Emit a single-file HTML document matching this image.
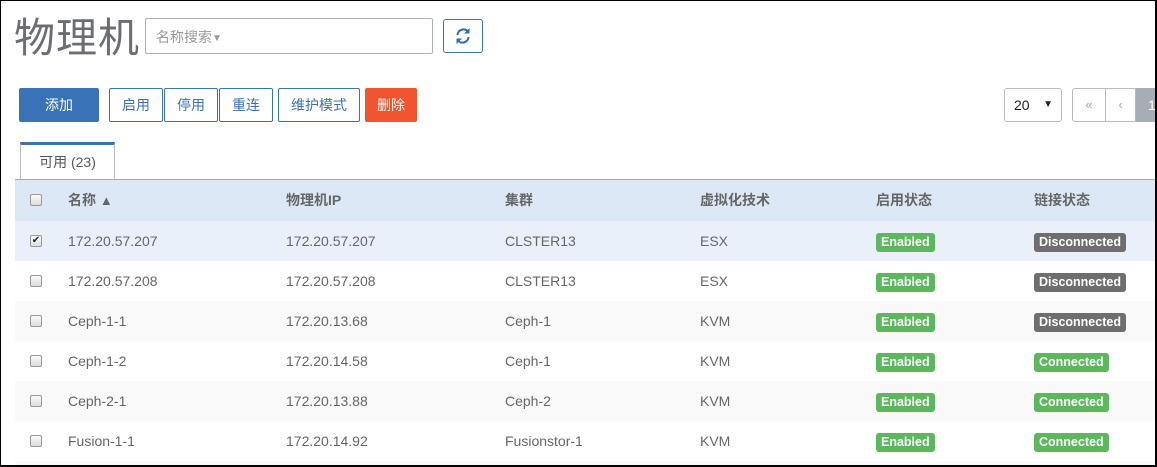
<!DOCTYPE html>
<html><head><meta charset="utf-8"><style>
*{box-sizing:border-box;margin:0;padding:0}
html,body{width:1157px;height:467px;overflow:hidden}
body{background:#fff;font-family:"Liberation Sans","Noto Sans CJK SC",sans-serif;position:relative}
.frame{position:absolute;left:0;top:0;width:1157px;height:467px;border:1px solid #000;border-right-width:2px;border-bottom-width:2px;z-index:10;pointer-events:none}
.clip{position:absolute;left:0;top:0;width:1155px;height:465px;overflow:hidden}
.a{position:absolute}
h1{position:absolute;left:14px;top:14px;font-size:41px;font-weight:normal;color:#6b6f75;line-height:48px;letter-spacing:1px}
.search{left:145px;top:18px;width:288px;height:36px;border:1px solid #a9b1ba;border-radius:2px;font-size:14px;color:#999;padding:10px 10px;line-height:16px}
.ref{left:443px;top:19px;width:40px;height:34px;border:1px solid #3a72b8;border-radius:3px}
.btn{position:absolute;top:88px;height:34px;border:1px solid #3a72b8;border-radius:2px;color:#3a72b8;font-size:14px;text-align:center;line-height:32px;background:#fff}
.tab{left:20px;top:142px;width:95px;height:38px;border:1px solid #bbb;border-top:3px solid #3a72b8;border-bottom:none;background:#fff;font-size:14px;color:#555;text-align:center;line-height:34px}
.line{left:15px;top:179px;width:1142px;height:1px;background:#aaa}
.row{position:absolute;left:15px;width:1142px;height:40px;font-size:14px;color:#666}
.row span{position:absolute;top:12px;line-height:16px}
.hd{background:#dce8f6;font-weight:bold;color:#666}
.cb{position:absolute;left:15px;top:14px;width:12px;height:12px;border:1px solid #999;border-radius:2px;background:linear-gradient(#fafafa,#ddd)}
.lb{position:absolute;top:12px;height:19px;border-radius:3px;color:#fff;font-size:12.5px;font-weight:bold;line-height:18px;padding:0 5px}
.g{background:#5cb85c}.d{background:#6e6e6e}
</style></head><body>
<div class="clip">
<h1>物理机</h1>
<div class="a search">名称搜索<span style="font-size:10px;vertical-align:1px">▼</span></div>
<div class="a ref"><svg width="38" height="32" viewBox="0 0 38 32"><g fill="none" stroke="#2f6db5" stroke-width="2"><path d="M13.5 15a6 6 0 0 1 10.5-3.5"/><path d="M24.5 17a6 6 0 0 1-10.5 3.5"/></g><path d="M25.5 8v5.5H20z" fill="#2f6db5"/><path d="M12.5 24v-5.5H18z" fill="#2f6db5"/></svg></div>
<div class="btn" style="left:19px;width:80px;background:#3a72b8;color:#fff">添加</div>
<div class="btn" style="left:109px;width:54px">启用</div>
<div class="btn" style="left:164px;width:54px">停用</div>
<div class="btn" style="left:219px;width:54px">重连</div>
<div class="btn" style="left:278px;width:82px">维护模式</div>
<div class="btn" style="left:365px;width:52px;background:#f25430;border-color:#f25430;color:#fff">删除</div>
<div class="a" style="left:1004px;top:88px;width:58px;height:34px;border:1px solid #bbb;border-radius:3px;font-size:14px;line-height:32px;padding-left:9px;color:#222">20<span style="position:absolute;right:8px;font-size:10px">▼</span></div>
<div class="a" style="left:1072px;top:88px;width:34px;height:34px;border:1px solid #bbb;border-radius:3px 0 0 3px;color:#9ab;text-align:center;line-height:32px;font-size:13px">«</div>
<div class="a" style="left:1105px;top:88px;width:31px;height:34px;border:1px solid #bbb;color:#9ab;text-align:center;line-height:32px;font-size:13px">‹</div>
<div class="a" style="left:1136px;top:88px;width:30px;height:34px;background:#a7adb5;color:#fff;line-height:34px;padding-left:12px;font-size:14px">1</div>
<div class="a tab">可用 (23)</div>
<div class="a line"></div>
<div class="row hd" style="top:180px;height:41px"><div class="cb"></div><span style="left:53px">名称 <span style="position:static;font-size:13px">▲</span></span><span style="left:271px">物理机IP</span><span style="left:490px">集群</span><span style="left:685px">虚拟化技术</span><span style="left:861px">启用状态</span><span style="left:1019px">链接状态</span></div>
<div class="row" style="top:221px;background:#e9f0fa"><div class="cb" style="font-size:10px;line-height:10px;color:#222;text-align:center">✔</div><span style="left:53px">172.20.57.207</span><span style="left:271px">172.20.57.207</span><span style="left:490px">CLSTER13</span><span style="left:685px">ESX</span><div class="lb g" style="left:861px">Enabled</div><div class="lb d" style="left:1019px">Disconnected</div></div>
<div class="row" style="top:261px"><div class="cb"></div><span style="left:53px">172.20.57.208</span><span style="left:271px">172.20.57.208</span><span style="left:490px">CLSTER13</span><span style="left:685px">ESX</span><div class="lb g" style="left:861px">Enabled</div><div class="lb d" style="left:1019px">Disconnected</div></div>
<div class="row" style="top:301px;background:#f9f9f9"><div class="cb"></div><span style="left:53px">Ceph-1-1</span><span style="left:271px">172.20.13.68</span><span style="left:490px">Ceph-1</span><span style="left:685px">KVM</span><div class="lb g" style="left:861px">Enabled</div><div class="lb d" style="left:1019px">Disconnected</div></div>
<div class="row" style="top:341px"><div class="cb"></div><span style="left:53px">Ceph-1-2</span><span style="left:271px">172.20.14.58</span><span style="left:490px">Ceph-1</span><span style="left:685px">KVM</span><div class="lb g" style="left:861px">Enabled</div><div class="lb g" style="left:1019px">Connected</div></div>
<div class="row" style="top:381px;background:#f9f9f9"><div class="cb"></div><span style="left:53px">Ceph-2-1</span><span style="left:271px">172.20.13.88</span><span style="left:490px">Ceph-2</span><span style="left:685px">KVM</span><div class="lb g" style="left:861px">Enabled</div><div class="lb g" style="left:1019px">Connected</div></div>
<div class="row" style="top:421px"><div class="cb"></div><span style="left:53px">Fusion-1-1</span><span style="left:271px">172.20.14.92</span><span style="left:490px">Fusionstor-1</span><span style="left:685px">KVM</span><div class="lb g" style="left:861px">Enabled</div><div class="lb g" style="left:1019px">Connected</div></div>
<div class="row" style="top:461px;height:4px;background:#f9f9f9"></div>
</div>
<div class="frame"></div>
</body></html>
